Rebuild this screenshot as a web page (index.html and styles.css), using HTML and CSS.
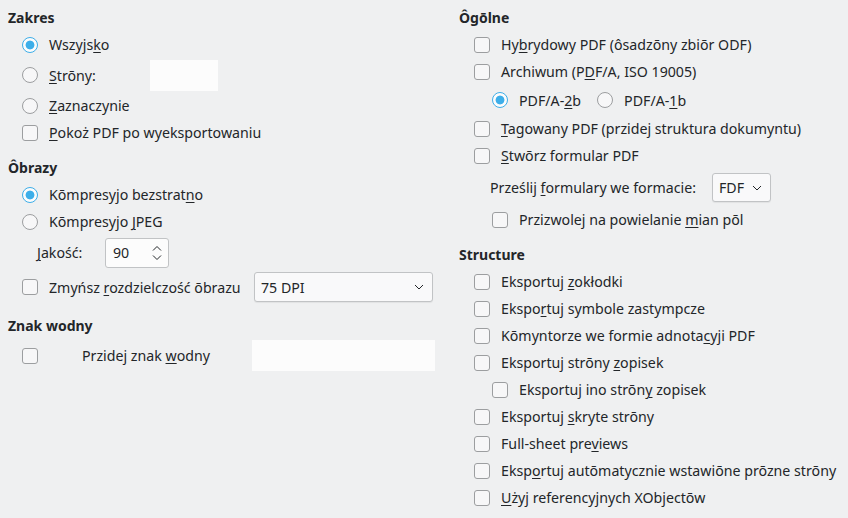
FILE: index.html
```html
<!DOCTYPE html>
<html lang="pl">
<head>
<meta charset="utf-8">
<link rel="stylesheet" href="styles.css">
</head>
<body>
<div class="page">
  <div class="col left">
    <div class="heading">Zakres</div>
    <div class="row"><span class="radio on"></span><span class="label">Wszyjs<u>k</u>o</span></div>
    <div class="row tall34"><span class="radio"></span><span class="label w101"><u>S</u>trōny:</span><span class="flat w68"></span></div>
    <div class="row"><span class="radio"></span><span class="label"><u>Z</u>aznaczynie</span></div>
    <div class="row"><span class="box"></span><span class="label"><u>P</u>okoż PDF po wyeksportowaniu</span></div>

    <div class="heading sub">Ôbrazy</div>
    <div class="row"><span class="radio on"></span><span class="label">Kōmpresyjo bezstrat<u>n</u>o</span></div>
    <div class="row"><span class="radio"></span><span class="label">Kōmpresyjo <u>J</u>PEG</span></div>
    <div class="row tall35 nopad"><span class="plain w68 ml29"><u>J</u>akość:</span>
      <span class="spin"><span class="val">90</span>
        <svg class="spin-ico" width="10" height="16" viewBox="0 0 10 16"><path d="M1 5.5 L5 1.5 L9 5.5" fill="none" stroke="#232629" stroke-width="1"/><path d="M1 10.5 L5 14.5 L9 10.5" fill="none" stroke="#232629" stroke-width="1"/></svg>
      </span>
    </div>
    <div class="row tall34"><span class="box"></span><span class="label w205">Zmyńsz <u>r</u>ozdzielczość ōbrazu</span>
      <span class="combo w179"><span class="val">75 DPI</span>
        <svg class="chev" width="10" height="6" viewBox="0 0 10 6"><path d="M1 1 L5 5 L9 1" fill="none" stroke="#232629" stroke-width="1"/></svg>
      </span>
    </div>

    <div class="heading sub">Znak wodny</div>
    <div class="row tall33"><span class="box"></span><span class="label wide w170">Przidej znak <u>w</u>odny</span><span class="flat w183"></span></div>
  </div>

  <div class="col right">
    <div class="heading">Ôgōlne</div>
    <div class="row"><span class="box"></span><span class="label">Hy<u>b</u>rydowy PDF (ôsadzōny zbiōr ODF)</span></div>
    <div class="row"><span class="box"></span><span class="label">Archiwum (P<u>D</u>F/A, ISO 19005)</span></div>
    <div class="row tall30 indent"><span class="radio on"></span><span class="label">PDF/A-<u>2</u>b</span><span class="radio gap"></span><span class="label">PDF/A-<u>1</u>b</span></div>
    <div class="row"><span class="box"></span><span class="label"><u>T</u>agowany PDF (przidej struktura dokumyntu)</span></div>
    <div class="row"><span class="box"></span><span class="label"><u>S</u>twōrz formular PDF</span></div>
    <div class="row tall37 nopad"><span class="plain w222 ml31">Prześlij <u>f</u>ormulary we formacie:</span>
      <span class="combo w59 h29"><span class="val">FDF</span>
        <svg class="chev" width="10" height="6" viewBox="0 0 10 6"><path d="M1 1 L5 5 L9 1" fill="none" stroke="#232629" stroke-width="1"/></svg>
      </span>
    </div>
    <div class="row indent"><span class="box"></span><span class="label">Przizwolej na powielanie <u>m</u>ian pōl</span></div>

    <div class="heading sub">Structure</div>
    <div class="row"><span class="box"></span><span class="label">Eksportuj <u>z</u>okłodki</span></div>
    <div class="row"><span class="box"></span><span class="label">Ekspo<u>r</u>tuj symbole zastympcze</span></div>
    <div class="row"><span class="box"></span><span class="label">Kōmyntorze we formie adnota<u>c</u>yji PDF</span></div>
    <div class="row"><span class="box"></span><span class="label">Eksportuj strōny <u>z</u>opisek</span></div>
    <div class="row indent"><span class="box"></span><span class="label">Eksportuj ino strōn<u>y</u> zopisek</span></div>
    <div class="row"><span class="box"></span><span class="label">Eksportuj <u>s</u>kryte strōny</span></div>
    <div class="row"><span class="box"></span><span class="label">Full-sheet pre<u>v</u>iews</span></div>
    <div class="row"><span class="box"></span><span class="label">Eksp<u>o</u>rtuj autōmatycznie wstawiōne prōzne strōny</span></div>
    <div class="row"><span class="box"></span><span class="label"><u>U</u>żyj referencyjnych XObjectōw</span></div>
  </div>
</div>
</body>
</html>
```

FILE: styles.css
```css
* { box-sizing: border-box; margin: 0; padding: 0; }
html, body { background: #eff0f1; }
body {
  font-family: "Noto Sans", "DejaVu Sans", sans-serif;
  font-size: 14.2px;
  color: #232629;
  width: 848px;
  height: 518px;
  overflow: hidden;
}
u { text-decoration: underline; text-underline-offset: 2px; text-decoration-thickness: 1px; }

.page { display: flex; gap: 24px; padding: 4px 0 0 8px; }
.col { display: flex; flex-direction: column; }
.left { width: 427px; flex: none; }
.right { flex: 1; }

.heading { font-weight: bold; font-size: 14px; height: 27px; display: flex; align-items: center; }
.heading.sub { margin-top: 8px; }

.row { height: 27px; display: flex; align-items: center; padding-left: 14px; white-space: nowrap; }
.right .row { padding-left: 15px; }
.right .row.indent { padding-left: 33px; }
.row.nopad, .right .row.nopad { padding-left: 0; }
.tall30 { height: 30px; }
.tall33 { height: 33px; }
.tall34 { height: 34px; }
.tall35 { height: 35px; }
.tall37 { height: 37px; }

.box, .radio {
  width: 16px; height: 16px; flex: none;
  border: 1px solid #9c9ea0;
  background: #f7f7f8;
}
.box { border-radius: 3px; }
.radio { border-radius: 50%; }
.radio.on {
  border-color: #3daee9;
  background: radial-gradient(circle at center, #3daee9 0, #3daee9 4px, #fcfcfc 4.8px);
}
.radio.gap { margin-left: 16px; }

.label { margin-left: 11px; }
.label.wide { margin-left: 44px; }
.plain { display: inline-block; }
.w101 { width: 101px; flex: none; }
.w205 { width: 205px; flex: none; }
.w170 { width: 170px; flex: none; }
.w68 { width: 68px; flex: none; }
.w222 { width: 222px; flex: none; }
.ml29 { margin-left: 29px; }
.ml31 { margin-left: 31px; }

.flat { height: 31px; background: #fcfcfc; display: inline-block; }
.w183 { width: 183px; flex: none; }

.spin {
  width: 64px; height: 30px; flex: none;
  border: 1px solid #c1c3c5; border-radius: 3px;
  background: #fcfcfc;
  display: flex; align-items: center; justify-content: space-between;
  padding: 0 6px 0 7px;
}

.combo {
  height: 30px; flex: none;
  border: 1px solid #c1c3c5; border-radius: 3px;
  background: #f9f9fa;
  box-shadow: 0 1px 1px rgba(0,0,0,0.06);
  display: flex; align-items: center; justify-content: space-between;
  padding: 0 8px 0 6px;
}
.w179 { width: 179px; }
.w59 { width: 59px; }
.h29 { height: 29px; }
.chev { flex: none; }
```
